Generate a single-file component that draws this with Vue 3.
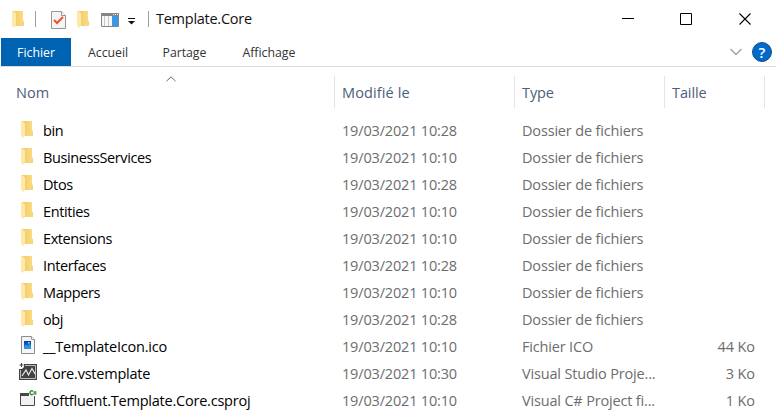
<script setup>
const folders = [
  ['bin', '10:28'],
  ['BusinessServices', '10:10'],
  ['Dtos', '10:28'],
  ['Entities', '10:10'],
  ['Extensions', '10:10'],
  ['Interfaces', '10:28'],
  ['Mappers', '10:10'],
  ['obj', '10:28'],
].map(([name, time]) => ({ name, time, icon: 'folder', type: 'Dossier de fichiers', size: '' }))

const files = [
  { name: '__TemplateIcon.ico', time: '10:10', icon: 'image', type: 'Fichier ICO', size: '44 Ko' },
  { name: 'Core.vstemplate', time: '10:30', icon: 'template', type: 'Visual Studio Proje...', size: '3 Ko' },
  { name: 'Softfluent.Template.Core.csproj', time: '10:10', icon: 'project', type: 'Visual C# Project fi...', size: '1 Ko' },
]

const rows = [...folders, ...files]
</script>

<template>
  <div class="explorer">
    <svg class="defs" width="0" height="0" aria-hidden="true">
      <defs>
        <linearGradient id="gold" x1="0" x2="1">
          <stop offset="0" stop-color="#efca68" />
          <stop offset="1" stop-color="#fddc82" />
        </linearGradient>
        <linearGradient id="sky" x1="0" y1="0" x2="0" y2="1">
          <stop offset="0" stop-color="#063fa5" />
          <stop offset="1" stop-color="#1590ed" />
        </linearGradient>
      </defs>
      <symbol id="folder" viewBox="0 0 12 18">
        <path d="M1 1H11V10.5L12 11.5V16H3Z" fill="url(#gold)" />
        <path d="M10 11.5L11 10.5L12 11.5V16H10Z" fill="#f6d47a" />
        <path d="M0 1H1L4 3.5V15L2.5 18L0 16Z" fill="#ffe9a8" />
      </symbol>
    </svg>

    <header class="titlebar">
      <svg class="qa-folder" width="12" height="18"><use href="#folder" /></svg>
      <i class="rule first"></i>
      <svg class="qa-check" width="15" height="19" viewBox="0 0 15 19">
        <path d="M.5.5H10.5L14.5 4.5V17.5H.5Z" fill="#f4f4f4" stroke="#969696" />
        <path d="M10.5.5V4.5H14.5" fill="#fff" stroke="#969696" />
        <path d="M3 9L6 12L12 6" fill="none" stroke="#ef5422" stroke-width="2" />
      </svg>
      <svg class="qa-folder second" width="12" height="18"><use href="#folder" /></svg>
      <svg class="qa-pane" width="18" height="14" viewBox="0 0 18 14">
        <path d="M.5.5H17.5V13.5H.5Z" fill="#f8f8f8" stroke="#858585" />
        <path d="M0 0H18V3H0Z" fill="#858585" />
        <path d="M12 1H13V2H12ZM14 1H15V2H14ZM16 1H17V2H16Z" fill="#eee" />
        <path d="M3.5 3V13M7.5 3V13" stroke="#c8c8c8" />
        <path d="M11 3H17V13H11Z" fill="#3999e6" />
      </svg>
      <svg class="qa-more" width="7" height="7" viewBox="0 0 7 7">
        <path d="M0 .5H7" stroke="#111" /><path d="M0 3H7L3.5 6.5Z" fill="#111" />
      </svg>
      <i class="rule last"></i>
      <h1>Template.Core</h1>
      <svg class="window-controls" width="130" height="14" viewBox="0 0 130 14">
        <path d="M0 6.5H12M58.5 1.5H69.5V12.5H58.5Z" fill="none" stroke="#000" />
        <path d="M117.5 1.5L128.5 12.5M128.5 1.5L117.5 12.5" fill="none" stroke="#000" stroke-width="1.1" />
      </svg>
    </header>

    <nav class="ribbon">
      <span class="tab active">Fichier</span>
      <span class="tab home">Accueil</span>
      <span class="tab share">Partage</span>
      <span class="tab view">Affichage</span>
      <svg class="expand" width="12" height="8" viewBox="0 0 12 8"><path d="M.5 1L6 6.5L11.5 1" fill="none" stroke="#a0a0a0" stroke-width="1.3" /></svg>
      <span class="help">?</span>
    </nav>

    <main>
      <div class="grid columns">
        <span class="col name">Nom
          <svg class="sort" width="10" height="6" viewBox="0 0 10 6"><path d="M.5 5.2L5 .8L9.5 5.2" fill="none" stroke="#666" /></svg>
        </span>
        <span class="col modified">Modifié le</span>
        <span class="col type">Type</span>
        <span class="col size">Taille</span>
      </div>
      <div v-for="row in rows" :key="row.name" class="grid row" :class="row.icon + '-row'">
        <div class="name-cell">
          <span class="icon" :class="row.icon">
            <svg v-if="row.icon === 'folder'" width="12" height="18"><use href="#folder" /></svg>
            <svg v-else-if="row.icon === 'image'" width="14" height="18" viewBox="0 0 14 18">
              <path d="M.5.5H10.5L13.5 3.5V17.5H.5Z" fill="#f5f5f5" stroke="#8c8c8c" />
              <path d="M10.5.5V3.5H13.5" fill="#fff" stroke="#9a9a9a" />
              <path d="M3 5H10V13H3Z" fill="url(#sky)" />
              <path d="M3 11L5 8.5L7 10L8.5 8L10 9.5V13H3Z" fill="#3295df" />
              <path d="M7 6H8.5V7.5H7Z" fill="#a7e7ff" />
            </svg>
            <svg v-else-if="row.icon === 'template'" width="18" height="17" viewBox="0 0 18 17">
              <path d="M5 1H18V17H0V6H5Z" fill="#424242" />
              <path d="M6 2.5H16.5V15.5H1.5V7" fill="none" stroke="#ddd" stroke-width=".8" />
              <path d="M3 13L7 7L9.5 12L13 5.5L16 11" fill="none" stroke="#e8e8e8" stroke-width="1.2" />
              <path d="M2.5 0V4M.5 2H4.5M5 4V7M3.5 5.5H6.5" stroke="#424242" />
            </svg>
            <svg v-else width="18" height="17" viewBox="0 0 18 17">
              <path d="M1.5 3.5H15.5V15.5H1.5Z" fill="#f1f1f1" stroke="#484848" />
              <path d="M1 3H16V6H1Z" fill="#484848" />
              <path d="M10 0H18V6H10Z" fill="#fff" />
              <path d="M14 1.4C12.8.2 11 1 11 2.8S12.8 5.2 14 4" fill="none" stroke="#369039" stroke-width="1.5" />
              <path d="M15.2 1V4.8M16.7 1V4.8M14.4 2.1H17.6M14.4 3.7H17.6" stroke="#369039" stroke-width=".8" />
            </svg>
          </span>
          <span class="filename">{{ row.name }}</span>
        </div>
        <span class="date">19/03/2021 {{ row.time }}</span>
        <span class="kind">{{ row.type }}</span>
        <span class="amount">{{ row.size }}</span>
      </div>
    </main>
  </div>
</template>

<style>
body { margin: 0; background: #fff; overflow: hidden; }
</style>
<style scoped>
.explorer { width: 776px; height: 415px; overflow: hidden; background: #fff; font: 14.5px "Open Sans", "Noto Sans", sans-serif; color: #111; }
.explorer * { box-sizing: border-box; }
svg { display: block; flex: none; }
.defs { position: absolute; }
.titlebar { height: 38px; display: flex; align-items: center; padding-left: 12px; }
.rule { width: 1px; height: 16px; background: #a0a0a0; flex: none; }
.first { margin-left: 11px; }
.qa-check { margin-left: 15px; margin-top: 3px; }
.second { margin-left: 11px; }
.qa-pane { margin-left: 12px; margin-top: 2px; }
.qa-more { margin-left: 9px; margin-top: 4px; }
.last { margin-left: 13px; }
h1 { margin: 0 0 0 7px; font-size: 14.5px; font-weight: 400; line-height: 38px; width: 466px; flex: none; letter-spacing: -.26px; }
.window-controls { flex: none; }
.ribbon { height: 29px; border-bottom: 1px solid #dcdcdc; display: flex; padding-left: 1px; font-size: 12.3px; color: #333; line-height: 29px; }
.tab { letter-spacing: -.02px; }
.active { width: 70px; height: 28px; background: #0063b1; color: #fff; text-align: center; }
.home { margin-left: 17px; width: 74.5px; }
.share { width: 80px; }
.view { width: 487.5px; }
.expand { margin-top: 10px; }
.help { width: 20px; height: 20px; margin: 4px 0 0 10px; border: 1px solid #17518b; border-radius: 50%; background: #0069ca; color: #fff; text-align: center; line-height: 18px; font-size: 15px; font-weight: 600; }
.grid { display: grid; grid-template-columns: 335px 180px 150px 100px; }
.columns { height: 50px; padding-top: 9px; color: #4c607a; }
.col { position: relative; height: 32px; border-right: 1px solid #e5e5e5; line-height: 33px; padding-left: 7px; letter-spacing: .12px; }
.col.type, .col.size { letter-spacing: -.1px; }
.col.name { padding-left: 16px; letter-spacing: 0; }
.sort { position: absolute; left: 166px; top: 0; }
.row { height: 27px; line-height: 28px; color: #6d6d6d; white-space: nowrap; }
.name-cell { display: flex; color: #000; }
.icon { width: 43px; padding-left: 21px; padding-top: 3px; flex: none; }
.icon.template, .icon.project { padding-left: 19px; }
.filename { letter-spacing: -.22px; }
.folder-row .filename { letter-spacing: -.4px; }
.date { padding-left: 7px; letter-spacing: -.17px; }
.kind { padding-left: 7px; letter-spacing: -.17px; }
.amount { text-align: right; padding-right: 10px; letter-spacing: -.08px; }
</style>
